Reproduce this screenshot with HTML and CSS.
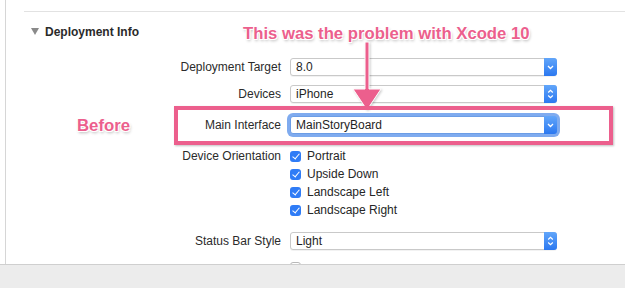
FILE: index.html
```html
<!DOCTYPE html>
<html lang="en">

<head>
    <meta charset="UTF-8">
    <title>Deployment Info</title>
    <link rel="stylesheet" href="styles.css">
</head>

<body>

    <div class="pane">
        <div class="divider"></div>

        <div class="section-title">
            <span class="disclosure"></span>
            Deployment Info
        </div>

        <div class="form">
            <label class="label row-target">Deployment Target</label>
            <div class="select row-target">
                <span class="value">8.0</span>
                <span class="popup">
                    <svg width="13" height="18" viewBox="0 0 13 18"><path d="M4 8 L6.5 10.5 L9 8" fill="none" stroke="#fff" stroke-width="1.3"/></svg>
                </span>
            </div>

            <label class="label row-devices">Devices</label>
            <div class="select row-devices">
                <span class="value">iPhone</span>
                <span class="popup">
                    <svg width="13" height="18" viewBox="0 0 13 18"><path d="M4.2 7.5 L6.5 5.3 L8.8 7.5 M4.2 10.5 L6.5 12.7 L8.8 10.5" fill="none" stroke="#fff" stroke-width="1.2"/></svg>
                </span>
            </div>

            <label class="label row-main">Main Interface</label>
            <div class="select focused row-main">
                <span class="value">MainStoryBoard</span>
                <span class="popup">
                    <svg width="13" height="18" viewBox="0 0 13 18"><path d="M4 8 L6.5 10.5 L9 8" fill="none" stroke="#fff" stroke-width="1.3"/></svg>
                </span>
            </div>

            <label class="label row-orient">Device Orientation</label>
            <div class="checks row-orient">
                <div class="check"><span class="box on"></span>Portrait</div>
                <div class="check"><span class="box on"></span>Upside Down</div>
                <div class="check"><span class="box on"></span>Landscape Left</div>
                <div class="check"><span class="box on"></span>Landscape Right</div>
            </div>

            <label class="label row-status">Status Bar Style</label>
            <div class="select row-status">
                <span class="value">Light</span>
                <span class="popup">
                    <svg width="13" height="18" viewBox="0 0 13 18"><path d="M4.2 7.5 L6.5 5.3 L8.8 7.5 M4.2 10.5 L6.5 12.7 L8.8 10.5" fill="none" stroke="#fff" stroke-width="1.2"/></svg>
                </span>
            </div>

            <div class="label row-hidden"></div>
            <div class="checks row-hidden">
                <div class="check"><span class="box"></span></div>
            </div>
        </div>

        <!-- annotations drawn over the screenshot -->
        <div class="note note-title">This was the problem with Xcode 10</div>
        <svg class="arrow" width="34" height="74" viewBox="0 0 34 74">
            <path d="M15 0 H19 V47 H31 L17 68 L3 47 H15 Z" fill="#ec5f8d" stroke="#fff" stroke-width="1"/>
        </svg>
        <div class="note note-before">Before</div>
        <div class="highlight"></div>
    </div>

    <div class="statusbar"></div>

</body>

</html>
```

FILE: styles.css
```css
body {
    margin: 0;
    width: 625px;
    height: 288px;
    overflow: hidden;
    background: #fff;
    font-family: "Liberation Sans", Arial, sans-serif;
    font-size: 12px;
    color: #262626;
}

.pane {
    position: relative;
    height: 264px;
    margin-left: 5px;
    border-left: 1px solid #d6d6d6;
    overflow: hidden;
}

.divider {
    margin: 11px 0 0 18px;
    border-top: 1px solid #e2e2e2;
}

.section-title {
    display: flex;
    align-items: center;
    gap: 6px;
    margin: 12px 0 0 25px;
    font-weight: bold;
    font-size: 12px;
    color: #2a2a2a;
    height: 15px;
}

.disclosure {
    width: 0;
    height: 0;
    border-left: 4px solid transparent;
    border-right: 4px solid transparent;
    border-top: 7px solid #8a8a8a;
}

.form {
    display: grid;
    grid-template-columns: 275px 267px;
    column-gap: 9px;
    align-items: center;
}

.label {
    text-align: right;
    color: #2b2b2b;
}

.row-target {
    margin-top: 19px;
}

.row-devices {
    margin-top: 9px;
}

.row-main {
    margin-top: 13px;
}

.row-orient {
    margin-top: 13px;
    align-self: start;
}

.label.row-orient {
    line-height: 18px;
}

.row-status {
    margin-top: 13px;
}

.row-hidden {
    margin-top: 8px;
}

.select {
    display: flex;
    align-items: center;
    height: 18px;
    box-sizing: border-box;
    border: 1px solid #c9c9c9;
    border-radius: 3px;
    background: #fff;
    box-shadow: 0 1px 0 rgba(0, 0, 0, 0.05);
}

.select .value {
    flex: 1;
    padding-left: 5px;
    color: #1f1f1f;
}

.popup {
    width: 13px;
    height: 18px;
    margin: -1px -1px -1px 0;
    border-radius: 0 3px 3px 0;
    background: linear-gradient(#62a6fa, #2b78f0);
}

.popup svg {
    display: block;
}

.select.focused {
    box-shadow: 0 0 0 3px #7fabef;
    border-color: #6c9de6;
}

.checks {
    display: flex;
    flex-direction: column;
}

.check {
    display: flex;
    align-items: center;
    gap: 6px;
    height: 18px;
    color: #262626;
}

.box {
    position: relative;
    width: 11px;
    height: 11px;
    box-sizing: border-box;
    border-radius: 3px;
    border: 1px solid #b8b8b8;
    background: #fff;
}

.box.on {
    border: none;
    background: #2f7cf6;
}

.box.on::after {
    content: "";
    position: absolute;
    left: 3.5px;
    top: 1.5px;
    width: 3px;
    height: 6px;
    border-right: 1.5px solid #fff;
    border-bottom: 1.5px solid #fff;
    transform: rotate(40deg);
}

.statusbar {
    height: 24px;
    border-top: 1px solid #cfcfcf;
    background: #ececec;
}

.note {
    position: absolute;
    font-family: "Liberation Sans", Arial, sans-serif;
    font-weight: bold;
    color: #ec5f8d;
    text-shadow: -1px -1px 0 #fff, 1px -1px 0 #fff, -1px 1px 0 #fff, 1px 1px 0 #fff, 1px 2px 3px rgba(0, 0, 0, 0.3);
}

.note-title {
    left: 237px;
    top: 24px;
    font-size: 16.7px;
}

.note-before {
    left: 71px;
    top: 116px;
    font-size: 16.8px;
}

.arrow {
    position: absolute;
    left: 344px;
    top: 42px;
    filter: drop-shadow(1px 1px 1px rgba(0, 0, 0, 0.2));
}

.highlight {
    position: absolute;
    left: 168px;
    top: 106px;
    width: 431px;
    height: 31px;
    border: 4px solid #ec5f8d;
    box-shadow: 1px 1px 2px rgba(0, 0, 0, 0.25);
}
```
